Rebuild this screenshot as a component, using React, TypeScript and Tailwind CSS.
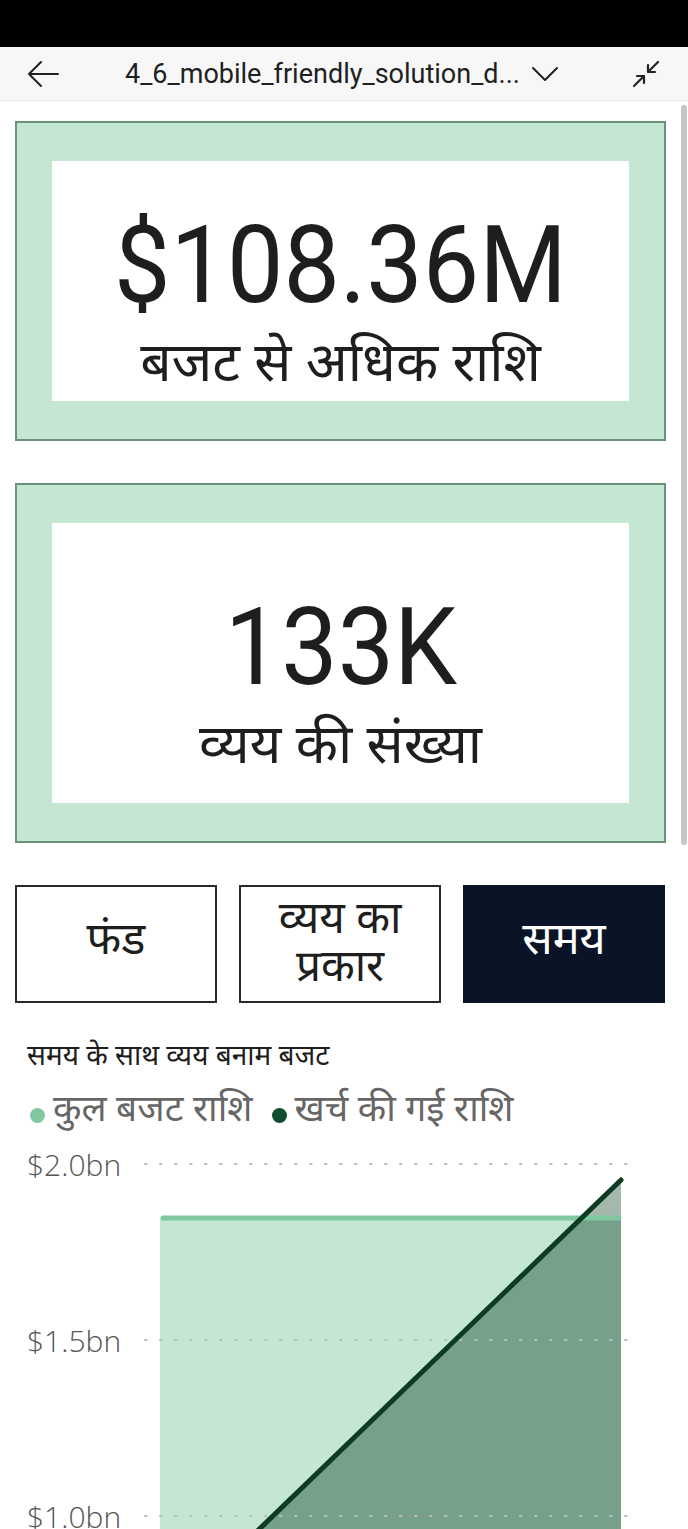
const hindi = { fontFamily: '"Noto Sans Devanagari", "Noto Sans", "Lohit Devanagari", sans-serif' };
const din = { fontFamily: 'Roboto, "Liberation Sans", sans-serif' };

function StatCard({ value, label, tall }: { value: string; label: string; tall?: boolean }) {
  return (
    <div className={`border-2 border-[#6a917a] bg-[#c5e6d3] px-[35px] py-[38px] ${tall ? "h-[360px]" : "h-[320px]"}`}>
      <div className={`flex h-full flex-col items-center bg-white ${tall ? "pt-[70px]" : "pt-[50px]"}`}>
        <div className="origin-center scale-x-[0.93] text-[108px] leading-none text-[#1e1e1e]" style={din}>
          {value}
        </div>
        <div className="mt-[16px] text-[55px] leading-[66px] text-[#1e1e1e]" style={hindi}>
          {label}
        </div>
      </div>
    </div>
  );
}

function Chart() {
  // y positions (px inside svg): $2.0bn = 24, $1.5bn = 200, $1.0bn = 376
  const grid = [
    { y: 24, label: "$2.0bn" },
    { y: 200, label: "$1.5bn" },
    { y: 376, label: "$1.0bn" },
  ];
  return (
    <svg width="688" height="400" viewBox="0 0 688 400" className="block">
      <rect x="160" y="78" width="461" height="330" fill="#c5e6d3" />
      <polygon points="259,389 581.6,78 621,78 621,400 248,400" fill="#77a08a" />
      <polygon points="581.6,78 621,40 621,78" fill="#a5b8ac" />
      {grid.map((g) => (
        <g key={g.label}>
          <line x1="145" y1={g.y} x2="640" y2={g.y} stroke="#bdbdbd" strokeWidth="2" strokeDasharray="1.5 13.5" strokeLinecap="round" />
          <text x="27" y={g.y + 12} fontSize="30" fill="#555" fontWeight="300" fontFamily='"Open Sans", "Noto Sans", sans-serif'>
            {g.label}
          </text>
        </g>
      ))}
      <line x1="163" y1="78" x2="619" y2="78" stroke="#7fc8a0" strokeWidth="5" strokeLinecap="round" />
      <line x1="248" y1="400" x2="621" y2="40" stroke="#0c3d22" strokeWidth="5" strokeLinecap="round" />
    </svg>
  );
}

export default function App() {
  return (
    <div className="relative h-[1529px] w-[688px] overflow-hidden bg-white">
      <div className="h-[47px] bg-black" />
      <header className="flex h-[54px] items-center border-b border-[#e8e8e8] bg-[#f7f7f7]">
        <svg width="34" height="30" viewBox="0 0 34 30" className="ml-[26px]" fill="none" stroke="#222" strokeWidth="2" strokeLinecap="round" strokeLinejoin="round">
          <path d="M3 15h29M15 3 3 15l12 12" />
        </svg>
        <div className="ml-[65px] text-[27px] leading-[34px] text-[#1f1f1f]" style={din}>
          4_6_mobile_friendly_solution_d...
        </div>
        <svg width="28" height="18" viewBox="0 0 28 18" className="ml-[11px]" fill="none" stroke="#222" strokeWidth="2" strokeLinecap="round" strokeLinejoin="round">
          <path d="M2 3l12 12 12-12" />
        </svg>
        <svg width="30" height="30" viewBox="0 0 30 30" className="ml-[72px]" fill="none" stroke="#222" strokeWidth="2.2" strokeLinecap="round" strokeLinejoin="round">
          <path d="M3 27 13 17M6 17h7v7M27 3 17 13M24 13h-7V6" />
        </svg>
      </header>

      <div className="absolute right-[1px] top-[105px] h-[740px] w-[6px] rounded-full bg-[#c6c6c6]" />

      <main className="px-[15px] pt-[20px]">
        <div className="w-[651px]">
          <StatCard value="$108.36M" label="बजट से अधिक राशि" />
          <div className="mt-[42px]">
            <StatCard value="133K" label="व्यय की संख्या" tall />
          </div>
          <div className="mt-[42px] flex gap-[22px]">
            <div className="flex h-[118px] w-[202px] items-center justify-center border-2 border-[#2b2b2b] text-[45px] text-[#1e1e1e]" style={hindi}>
              फंड
            </div>
            <div className="flex h-[118px] w-[202px] flex-col items-center justify-center border-2 border-[#2b2b2b] pt-[6px] text-[44px] leading-[48px] text-[#1e1e1e]" style={hindi}>
              <span>व्यय का</span>
              <span>प्रकार</span>
            </div>
            <div className="flex h-[118px] w-[202px] items-center justify-center border-2 border-[#0b1326] bg-[#0b1326] text-[45px] text-white" style={hindi}>
              समय
            </div>
          </div>
        </div>
      </main>

      <section className="pt-[37px]">
        <div className="pl-[27px] text-[28px] leading-[36px] text-[#1e1e1e]" style={hindi}>
          समय के साथ व्यय बनाम बजट
        </div>
        <div className="mt-[13px] flex h-[46px] items-center pl-[30px] text-[37px] leading-[46px] text-[#666]" style={hindi}>
          <span className="mt-[6px] h-[15px] w-[15px] rounded-full bg-[#7fc8a0]" />
          <span className="ml-[8px]">कुल बजट राशि</span>
          <span className="ml-[20px] mt-[6px] h-[15px] w-[15px] rounded-full bg-[#0f4d2e]" />
          <span className="ml-[7px]">खर्च की गई राशि</span>
        </div>
        <div className="mt-[5px]">
          <Chart />
        </div>
      </section>
    </div>
  );
}
